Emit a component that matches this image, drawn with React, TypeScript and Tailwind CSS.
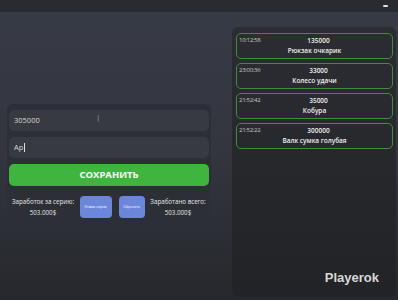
import React from "react";

const items = [
  { t: "10:12:58", v: "135000", n: "Рюкзак очкарик" },
  { t: "23:00:36", v: "33000", n: "Колесо удачи" },
  { t: "21:52:42", v: "35000", n: "Кобура" },
  { t: "21:52:22", v: "300000", n: "Валк сумка голубая" },
];

export default function App() {
  return (
    <div
      className="w-[398px] h-[300px] flex flex-col overflow-hidden bg-gradient-to-b from-[#373b45] via-[#33363f] to-[#26282d] text-white"
      style={{ fontFamily: "'Open Sans', 'Noto Sans', sans-serif" }}
    >
      <div className="h-[12px] bg-[#2a2b30] flex justify-end items-center pr-[10px] shrink-0">
        <div className="w-[5px] h-[2px] bg-[#e0e0e0] rounded-[1px]" />
      </div>
      <div className="flex flex-1">
        <div className="w-[232px] pl-[7px] pr-[21px] pt-[92px]">
          <div className="bg-[#2d2f36] rounded-[6px] px-[2px] pt-[6px] pb-[6px] flex flex-col gap-[6px]">
            <div className="h-[21px] bg-[#383a42] rounded-[5px] flex items-center pl-[5px] text-[7.5px] text-[#d8d8d8] relative">
              305000
              <span className="absolute left-[88px] top-[2px] text-[#bbb] text-[9px] font-light">I</span>
            </div>
            <div className="h-[21px] bg-[#383a42] rounded-[5px] flex items-center pl-[5px] text-[7.5px] text-[#d8d8d8]">
              Ap<span className="inline-block w-[0.5px] h-[9px] bg-[#ddd] ml-[0.5px]" />
            </div>
            <div className="h-[22px] bg-[#3fb43f] rounded-[5px] flex items-center justify-center text-[9.5px] font-bold text-white">
              СОХРАНИТЬ
            </div>
            <div className="flex items-center justify-between mt-[4px] px-[1px]">
              <div className="w-[66px] flex flex-col items-center text-[6.2px] leading-[11px] text-[#e6e6e6]">
                <span>Заработок за серию:</span>
                <span>503.000$</span>
              </div>
              <div className="flex gap-[7px]">
                <div className="w-[32px] h-[22px] bg-[#6c87d9] rounded-[4px] flex items-center justify-center text-[3.6px] text-white">
                  Новая серия
                </div>
                <div className="w-[26px] h-[22px] bg-[#6c87d9] rounded-[4px] flex items-center justify-center text-[3.6px] text-white">
                  Сбросить
                </div>
              </div>
              <div className="w-[60px] flex flex-col items-center text-[6.2px] leading-[11px] text-[#e6e6e6]">
                <span>Заработано всего:</span>
                <span>503.000$</span>
              </div>
            </div>
          </div>
        </div>
        <div className="w-[164px] mt-[15px] mb-[3px] bg-gradient-to-b from-[#2c2d33] to-[#222326] rounded-[6px] pl-[4px] pr-[3px] pt-[6px] flex flex-col">
          <div className="flex flex-col gap-[4px]">
            {items.map((it) => (
              <div
                key={it.t}
                className="h-[26px] border-[1.5px] border-[#3f8c3d] rounded-[5px] relative flex flex-col items-center justify-center"
              >
                <span className="absolute left-[2px] top-[2px] text-[6px] text-[#c8c8c8] tracking-[-0.3px]">
                  {it.t}
                </span>
                <span className="text-[6.5px] leading-[10px] font-semibold text-[#f0f0f0] ml-[8px]">{it.v}</span>
                <span className="text-[6.5px] leading-[10px] font-semibold text-[#f0f0f0]">{it.n}</span>
              </div>
            ))}
          </div>
          <div className="flex-1 flex items-end justify-end pr-[14px] pb-[10px]">
            <span
              className="text-[13px] font-bold text-[#d8d8d8]"
              style={{ fontFamily: "'Liberation Sans', Arial, sans-serif" }}
            >
              Playerok
            </span>
          </div>
        </div>
      </div>
    </div>
  );
}
